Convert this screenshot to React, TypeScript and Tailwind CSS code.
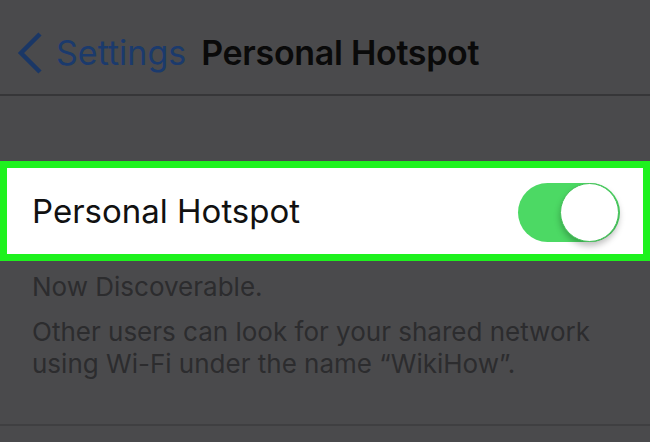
import React from "react";

export default function App() {
  return (
    <div
      className="w-[650px] h-[442px] bg-[#4a4a4c] flex flex-col overflow-hidden"
      style={{ fontFamily: "Inter, Roboto, 'Liberation Sans', sans-serif" }}
    >
      <div className="h-[96px] flex items-center border-b-2 border-[#363638] shrink-0">
        <div className="flex items-center pl-[16px] pt-[11px]">
          <svg width="28" height="42" viewBox="0 0 28 42" className="mr-[12px]">
            <path d="M24 2 L5 21 L24 40" fill="none" stroke="#1a3766" strokeWidth="4.5" strokeLinecap="butt" />
          </svg>
          <span className="text-[34px] text-[#1b3a6c]">Settings</span>
          <span className="text-[34px] text-[#0a0a0a] font-semibold ml-[15px] tracking-[-0.3px]">Personal Hotspot</span>
        </div>
      </div>
      <div className="h-[65px] shrink-0" />
      <div className="h-[100px] shrink-0 border-[7px] border-[#1ef21e] bg-white flex items-center justify-between pl-[25px] pr-[23px]">
        <span className="text-[33px] text-[#111] pt-[2px]">Personal Hotspot</span>
        <div className="relative w-[102px] h-[59px] rounded-full bg-[#4cd964] mt-[2px]">
          <div className="absolute right-[1px] top-0 w-[59px] h-[59px] rounded-full bg-white border border-[#43c158] shadow-[0_4px_6px_rgba(0,0,0,0.25)]" />
        </div>
      </div>
      <div className="pl-[32px] pt-[10px] text-[26px] text-[#2c2c2e] leading-[32px] h-[163px] shrink-0">
        <div className="mb-[13px]">Now Discoverable.</div>
        <div className="w-[575px]">
          Other users can look for your shared network using Wi-Fi under the name “WikiHow”.
        </div>
      </div>
      <div className="border-t-2 border-[#3f3f41] flex-1 bg-[#4a4a4c]" />
    </div>
  );
}
